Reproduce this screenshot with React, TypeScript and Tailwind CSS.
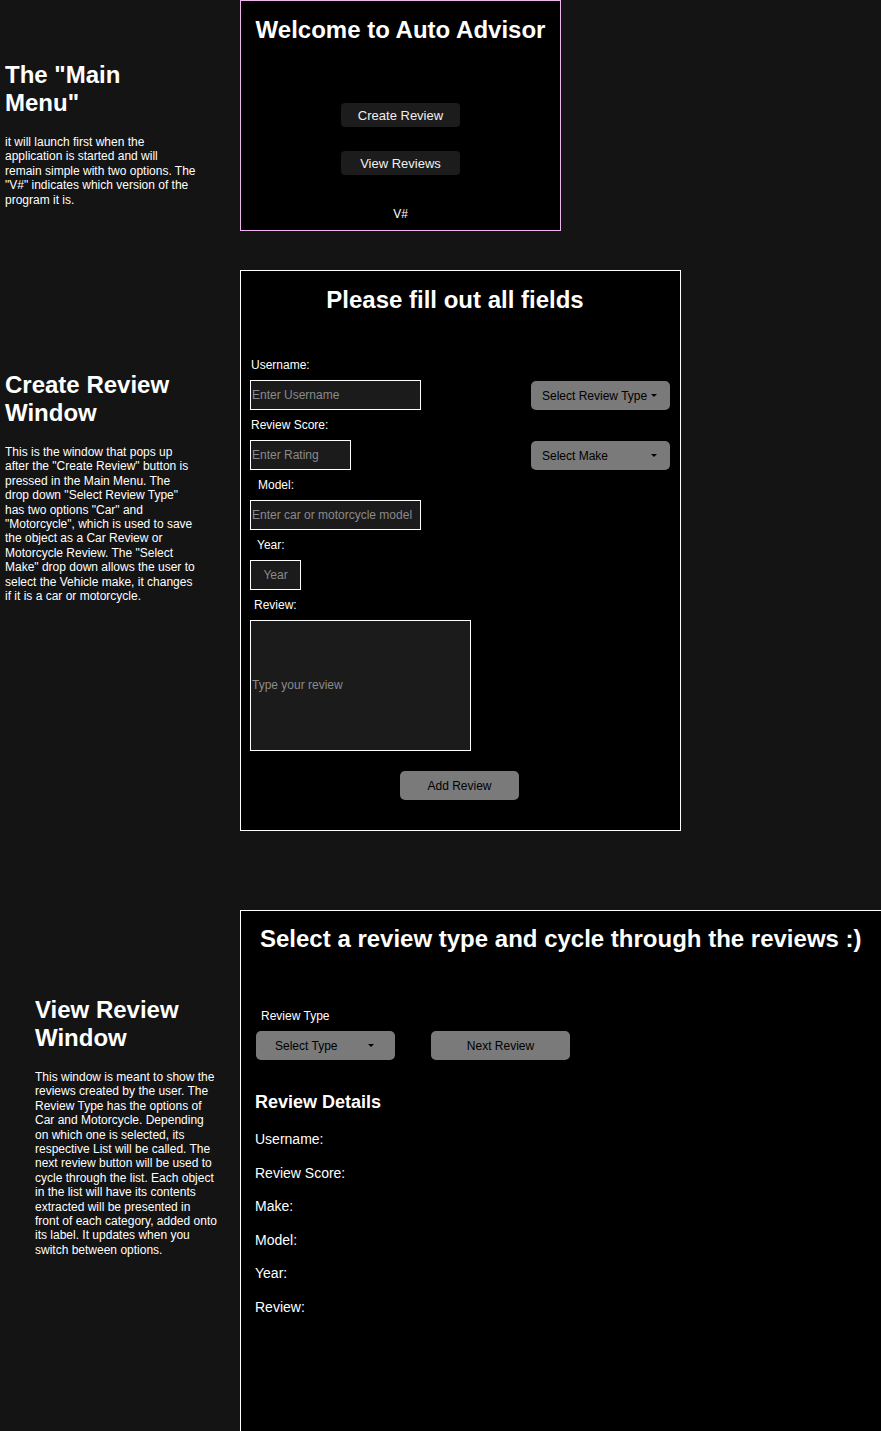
const Caret = () => (
  <svg width="6" height="3" viewBox="0 0 6 3" className="shrink-0">
    <path d="M0 0h6L3 3z" fill="#000" />
  </svg>
);

const Label = ({ text, pad }: { text: string; pad: string }) => (
  <div className={`h-[30px] flex items-center text-[12px] leading-[14px] ${pad}`}>{text}</div>
);

const inputCls =
  "h-[30px] border border-white bg-[#1b1b1b] px-[1px] text-[12px] text-white placeholder:text-[#8a8a8a] outline-none";

const App = () => {
  return (
    <div className="h-[1431px] overflow-hidden bg-[#141414] text-white font-['Liberation_Sans',Arial,sans-serif]">
      {/* main menu */}
      <section className="flex h-[231px]">
        <div className="w-[240px] shrink-0 pl-[5px] pt-[61px]">
          <h2 className="w-[191.5px] text-[24px] leading-[28px] font-bold mb-[18px]">The "Main Menu"</h2>
          <p className="w-[191.5px] text-[12px] leading-[14.4px]">
            it will launch first when the application is started and will remain simple with two options. The
            "V#" indicates which version of the program it is.
          </p>
        </div>
        <div className="w-[321px] h-[231px] shrink-0 border border-[#f0b4f0] bg-black flex flex-col items-center pt-[15px]">
          <h1 className="text-[24px] leading-[28px] font-bold">Welcome to Auto Advisor</h1>
          <button className="mt-[59px] w-[119px] h-[24px] rounded-[4px] bg-[#1c1c1c] text-[13px] leading-[15px] pt-[1px] text-[#f0f0f0]">
            Create Review
          </button>
          <button className="mt-[24px] w-[119px] h-[24px] rounded-[4px] bg-[#1c1c1c] text-[13px] leading-[15px] pt-[1px] text-[#f0f0f0]">
            View Reviews
          </button>
          <span className="mt-[32px] text-[12px] leading-[14.4px]">V#</span>
        </div>
      </section>

      {/* create review */}
      <section className="flex h-[561px] mt-[39px]">
        <div className="w-[240px] shrink-0 pl-[5px] pt-[101px]">
          <h2 className="w-[191.5px] text-[24px] leading-[28px] font-bold mb-[18px]">Create Review Window</h2>
          <p className="w-[191.5px] text-[12px] leading-[14.4px]">
            This is the window that pops up after the "Create Review" button is pressed in the Main Menu. The drop
            down "Select Review Type" has two options "Car" and "Motorcycle", which is used to save the object as a
            Car Review or Motorcycle Review. The "Select Make" drop down allows the user to select the Vehicle make,
            it changes if it is a car or motorcycle.
          </p>
        </div>
        <div className="w-[441px] h-[561px] shrink-0 border border-white bg-black pt-[15px]">
          <h1 className="text-center pr-[11px] text-[24px] leading-[28px] font-bold">Please fill out all fields</h1>
          <div className="mt-[36px] pl-[9px] pr-[10px] flex flex-col">
            <Label text="Username:" pad="pl-[1px]" />
            <div className="flex justify-between">
              <input className={`${inputCls} w-[171px]`} placeholder="Enter Username" />
              <div className="mt-[1px] w-[139px] h-[29px] rounded-[5px] bg-[#7a7a7a] text-black text-[12px] flex items-center justify-between pl-[11px] pr-[13px]">
                <span>Select Review Type</span>
                <Caret />
              </div>
            </div>
            <Label text="Review Score:" pad="pl-[1px]" />
            <div className="flex justify-between">
              <input className={`${inputCls} w-[101px]`} placeholder="Enter Rating" />
              <div className="mt-[1px] w-[139px] h-[29px] rounded-[5px] bg-[#7a7a7a] text-black text-[12px] flex items-center justify-between pl-[11px] pr-[13px]">
                <span>Select Make</span>
                <Caret />
              </div>
            </div>
            <Label text="Model:" pad="pl-[8px]" />
            <input className={`${inputCls} w-[171px]`} placeholder="Enter car or motorcycle model" />
            <Label text="Year:" pad="pl-[7px]" />
            <input className={`${inputCls} w-[51px] text-center`} placeholder="Year" />
            <Label text="Review:" pad="pl-[4px]" />
            <textarea
              className="w-[221px] h-[131px] resize-none border border-white bg-[#1b1b1b] px-[1px] pt-[57px] text-[12px] leading-[14px] text-white placeholder:text-[#8a8a8a] outline-none"
              placeholder="Type your review"
            />
            <button className="self-center mr-[1px] mt-[20px] w-[119px] h-[29px] rounded-[5px] bg-[#7a7a7a] text-black text-[12px]">
              Add Review
            </button>
          </div>
        </div>
      </section>

      {/* view reviews */}
      <section className="flex h-[521px] mt-[79px]">
        <div className="w-[240px] shrink-0 pl-[35px] pt-[86px]">
          <h2 className="w-[184px] text-[24px] leading-[28px] font-bold mb-[18px]">View Review Window</h2>
          <p className="w-[184px] text-[12px] leading-[14.4px]">
            This window is meant to show the reviews created by the user. The Review Type has the options of Car and
            Motorcycle. Depending on which one is selected, its respective List will be called. The next review
            button will be used to cycle through the list. Each object in the list will have its contents extracted
            will be presented in
            <br />
            front of each category, added onto its label. It updates when you switch between options.
          </p>
        </div>
        <div className="flex-1 h-[521px] border-l border-t border-white bg-black pl-[15px] pt-[14px] flex flex-col">
          <h1 className="pl-[4px] text-[24px] leading-[28px] font-bold whitespace-nowrap">
            Select a review type and cycle through the reviews :)
          </h1>
          <div className="mt-[56px] pl-[5px] text-[12px] leading-[14px]">Review Type</div>
          <div className="mt-[8px] flex gap-[36px]">
            <div className="w-[139px] h-[29px] rounded-[5px] bg-[#7a7a7a] text-black text-[12px] flex items-center justify-between pl-[19px] pr-[21px]">
              <span>Select Type</span>
              <Caret />
            </div>
            <button className="w-[139px] h-[29px] rounded-[5px] bg-[#7a7a7a] text-black text-[12px]">Next Review</button>
          </div>
          <h3 className="mt-[32px] -ml-[1px] text-[18px] leading-[21px] font-bold">Review Details</h3>
          <div className="mt-[10px] -ml-[1px] flex flex-col text-[14px] leading-[33.6px]">
            <span>Username:</span>
            <span>Review Score:</span>
            <span>Make:</span>
            <span>Model:</span>
            <span>Year:</span>
            <span>Review:</span>
          </div>
        </div>
      </section>
    </div>
  );
};

export default App;
